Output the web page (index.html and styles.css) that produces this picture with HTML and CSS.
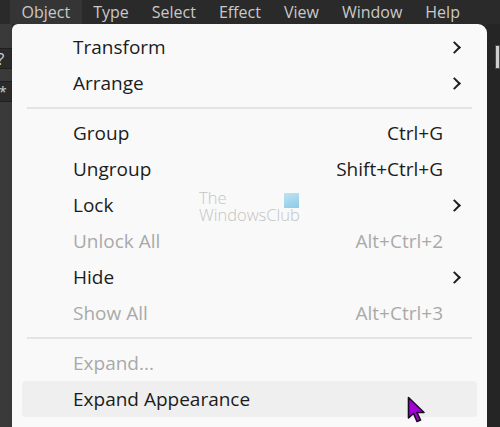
FILE: index.html
```html
<!DOCTYPE html>
<html lang="en">
  <head>
    <meta charset="UTF-8" />
    <title>Object menu</title>
    <link rel="stylesheet" href="styles.css">
  </head>
  <body>
    <ul class="menubar">
      <li class="active">Object</li>
      <li>Type</li>
      <li>Select</li>
      <li>Effect</li>
      <li>View</li>
      <li>Window</li>
      <li>Help</li>
    </ul>

    <div class="workspace">
      <div class="side side-left">
        <div class="tool tool-q">?</div>
        <div class="tool tool-star">*</div>
      </div>

      <ul class="dropdown">
        <li class="item"><span>Transform</span><i class="arrow"></i></li>
        <li class="item"><span>Arrange</span><i class="arrow"></i></li>
        <li class="sep"></li>
        <li class="item"><span>Group</span><em>Ctrl+G</em></li>
        <li class="item"><span>Ungroup</span><em>Shift+Ctrl+G</em></li>
        <li class="item"><span>Lock</span><i class="arrow"></i></li>
        <li class="item off"><span>Unlock All</span><em>Alt+Ctrl+2</em></li>
        <li class="item"><span>Hide</span><i class="arrow"></i></li>
        <li class="item off"><span>Show All</span><em>Alt+Ctrl+3</em></li>
        <li class="sep"></li>
        <li class="item off"><span>Expand...</span></li>
        <li class="item hover"><span>Expand Appearance</span></li>
        <li class="item"><span>Flatten Transparency...</span></li>
      </ul>

      <div class="side side-right">
        <div class="swatch"></div>
      </div>

      <div class="watermark">
        <span>The</span>
        <span>WindowsClub</span>
        <i class="wm-logo"></i>
      </div>

      <svg class="cursor" width="20" height="28" viewBox="0 0 20 28">
        <path d="M1.5 1.5 L1.5 22 L6.5 17.5 L10 25.5 L13.5 24 L10 16.5 L17 16.5 Z"
              fill="#a100d6" stroke="#1a0a20" stroke-width="1.6" stroke-linejoin="round" />
      </svg>
    </div>
  </body>
</html>
```

FILE: styles.css
```css
* {
  margin: 0;
  padding: 0;
  box-sizing: border-box;
}

li {
  list-style: none;
}

html,
body {
  width: 500px;
  height: 427px;
  overflow: hidden;
}

body {
  background: #2c2c2c;
  font-family: "Open Sans", "Noto Sans", sans-serif;
}

.menubar {
  display: flex;
  height: 24px;
  padding-left: 10px;
  background: #2a2a2a;
}

.menubar li {
  padding: 0 11.5px;
  font-size: 16px;
  line-height: 24px;
  color: #c9c9c9;
}

.menubar .active {
  background: #353535;
}

.workspace {
  position: relative;
  display: flex;
  height: 403px;
  overflow: hidden;
}

.side {
  flex: 1;
  background: #333333;
}

.side-left {
  flex: 0 0 12px;
  padding-top: 24px;
  background: #3a3a3a;
}

.tool {
  height: 21px;
  margin-bottom: 6px;
  border-top: 1px solid #1f1f1f;
  border-bottom: 1px solid #1f1f1f;
  background: #2b2b2b;
  color: #d0d0d0;
  font-size: 17px;
  line-height: 19px;
  text-indent: -3px;
  overflow: hidden;
}

.tool-star {
  margin-top: 12px;
  font-size: 14px;
  text-indent: -1px;
}

.side-right {
  padding-top: 21px;
  background: #252525;
}

.swatch {
  height: 24px;
  margin-left: 8px;
  border: 1px solid #4a4a4a;
  background: #cfcfcf;
}

.dropdown {
  flex: 0 0 475px;
  padding: 5px 10px 0;
  background: #f9f9f9;
  border-radius: 6px 9px 0 0;
  box-shadow: 1px 0 3px rgba(0, 0, 0, 0.45);
}

.item {
  display: flex;
  align-items: center;
  height: 36px;
  padding: 0 16px 0 51px;
  font-size: 19px;
  color: #1c1c1c;
}

.item span {
  flex: 1;
}

.item em {
  font-style: normal;
  margin-right: 18px;
}

.item.off {
  color: #a9a9a9;
}

.item.hover {
  background: #efefef;
  border-radius: 4px;
}

.arrow {
  width: 9px;
  height: 9px;
  margin-right: 2px;
  border-top: 2px solid #1e1e1e;
  border-right: 2px solid #1e1e1e;
  transform: rotate(45deg);
}

.sep {
  height: 14px;
  padding-top: 6px;
}

.sep::before {
  display: block;
  content: "";
  height: 2px;
  margin: 0 5px;
  background: #e4e4e4;
}

.watermark {
  position: absolute;
  left: 199px;
  top: 165px;
  display: flex;
  flex-direction: column;
  font-size: 16.5px;
  line-height: 17px;
  color: #c4c4c4;
  font-weight: 300;
}

.wm-logo {
  position: absolute;
  left: 85px;
  top: 4px;
  width: 15px;
  height: 15px;
  background: linear-gradient(160deg, #bfe3f3, #8ccbe8);
}

.cursor {
  position: absolute;
  left: 407px;
  top: 372px;
}
```
